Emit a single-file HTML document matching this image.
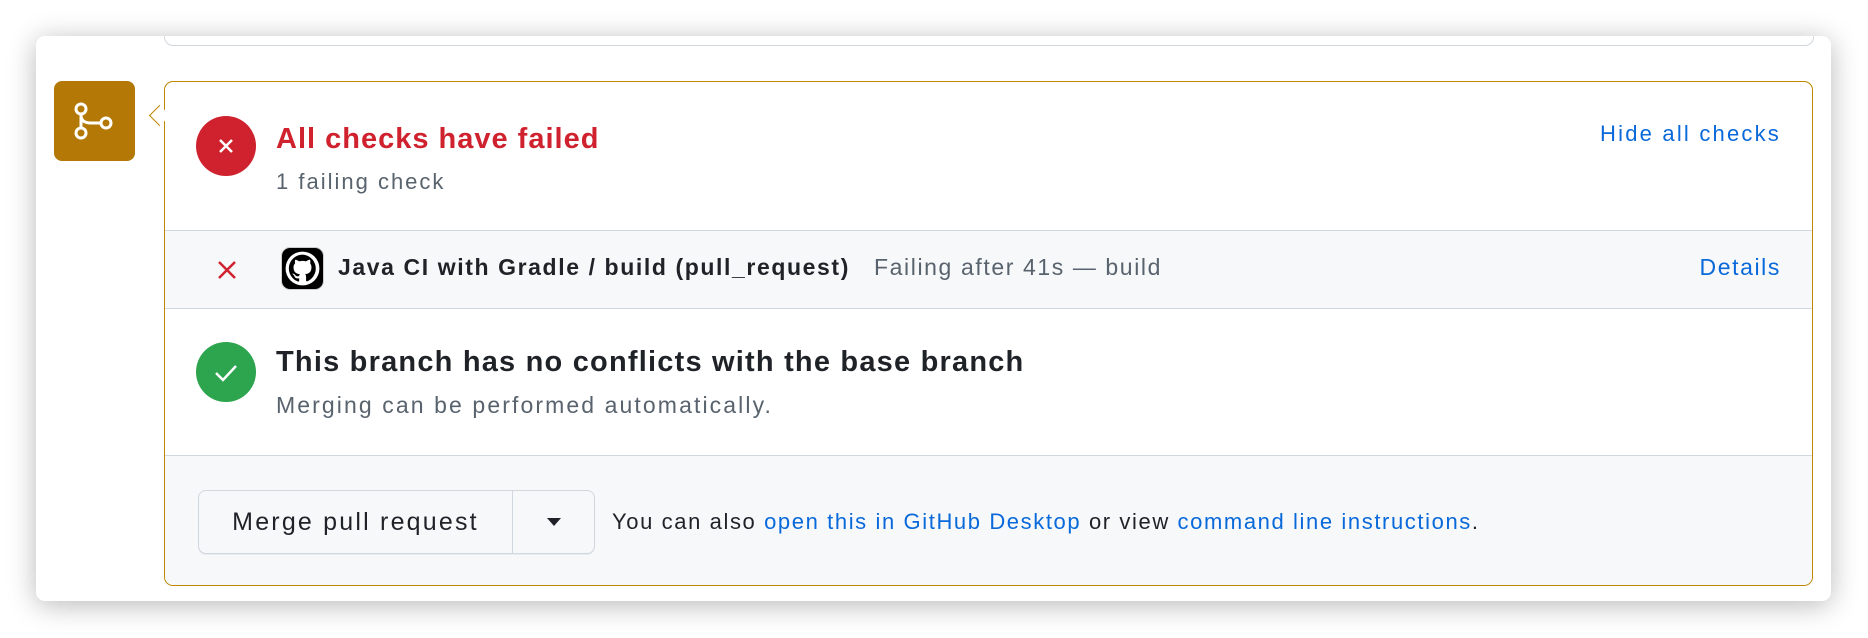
<!DOCTYPE html>
<html><head><style>
body{margin:0;width:1868px;height:638px;background:#fff;font-family:"Liberation Sans",sans-serif;position:relative;overflow:hidden}
.card{position:absolute;left:36px;top:36px;width:1795px;height:565px;background:#fff;border-radius:9px;box-shadow:0 4px 28px rgba(0,0,0,.28)}
.topbox{position:absolute;left:164px;top:36px;width:1648px;height:9px;border:1.5px solid #d0d7de;border-top:none;border-radius:0 0 9px 9px}
.ico{position:absolute;left:54px;top:81px;width:81px;height:80px;background:#b37806;border-radius:8px}
.box{position:absolute;left:164px;top:81px;width:1647px;height:503px;border:1.5px solid #bf8700;border-radius:9px;overflow:hidden;background:#fff}
.arrow{position:absolute;left:152px;top:108px;width:14px;height:14px;background:#fff;border-left:1.5px solid #bf8700;border-bottom:1.5px solid #bf8700;transform:rotate(45deg);z-index:2}
.abs{position:absolute;white-space:nowrap}
.circ{position:absolute;width:60px;height:60px;border-radius:50%}
.row{position:absolute;left:0;width:100%;background:#f6f8fa}
a{color:#0969da;text-decoration:none}
</style></head><body>
<div class="card"></div>
<div class="topbox"></div>
<div class="ico"><svg width="81" height="80" viewBox="0 0 81 80"><g fill="none" stroke="#fff" stroke-width="3"><circle cx="27" cy="28" r="5"/><circle cx="27" cy="52" r="5"/><circle cx="52" cy="42" r="5"/><path d="M27 33v14M27 34c0 6 4 8 10 8h10"/></g></svg></div>
<div class="box">
  <div class="circ" style="left:31px;top:34px;background:#cf222e"><svg width="60" height="60"><path d="M24 24l12 12M36 24l-12 12" stroke="#fff" stroke-width="2.5"/></svg></div>
  <div class="abs" style="left:111px;top:41px;font-size:29px;letter-spacing:1px;font-weight:bold;color:#cf222e">All checks have failed</div>
  <div class="abs" style="left:111px;top:87px;font-size:22px;letter-spacing:2px;color:#59636e">1 failing check</div>
  <div class="abs" style="right:31px;top:39px;font-size:22px;letter-spacing:2.2px"><a>Hide all checks</a></div>
  <div class="row" style="top:148px;height:77px;border-top:1.5px solid #d0d7de;border-bottom:1.5px solid #d0d7de">
    <svg class="abs" style="left:51px;top:28px" width="22" height="22"><path d="M3 3l16 16M19 3L3 19" stroke="#cf222e" stroke-width="2.5"/></svg>
    <div class="abs" style="left:116px;top:16px;width:43px;height:43px;background:#000;border-radius:9px;border:1px solid #ccc;box-sizing:border-box">
      <svg width="41" height="41" viewBox="0 0 16 16"><circle cx="8" cy="8" r="6.6" fill="#fff"/><path fill="#000" d="M8 2.6a5.4 5.4 0 0 0-1.7 10.5c.3 0 .4-.1.4-.3v-1c-1.5.3-1.8-.7-1.8-.7-.3-.6-.6-.8-.6-.8-.5-.3 0-.3 0-.3.5 0 .8.5.8.5.5.8 1.3.6 1.6.4 0-.3.2-.6.3-.7-1.2-.1-2.500-.6-2.5-2.7 0-.6.2-1.1.6-1.5 0-.1-.2-.7.1-1.4 0 0 .4-.1 1.5.6a5 5 0 0 1 2.7 0c1-.7 1.5-.6 1.5-.6.3.7.1 1.3.1 1.4.3.4.5.9.5 1.5 0 2.1-1.3 2.6-2.5 2.7.2.2.4.5.4 1v1.5c0 .2.1.3.4.3A5.4 5.4 0 0 0 8 2.6z"/></svg>
    </div>
    <div class="abs" style="left:173px;top:23px;font-size:23px;letter-spacing:1.6px;font-weight:bold;color:#1f2328">Java CI with Gradle / build (pull_request)</div>
    <div class="abs" style="left:709px;top:23px;font-size:23px;letter-spacing:1.6px;color:#59636e">Failing after 41s — build</div>
    <div class="abs" style="right:31px;top:23px;font-size:23px;letter-spacing:1.6px"><a>Details</a></div>
  </div>
  <div class="circ" style="left:31px;top:260px;background:#2da44e"><svg width="60" height="60"><path d="M20 31l7 7 13-14" fill="none" stroke="#fff" stroke-width="2.5"/></svg></div>
  <div class="abs" style="left:111px;top:264px;font-size:29px;letter-spacing:1.2px;font-weight:bold;color:#1f2328">This branch has no conflicts with the base branch</div>
  <div class="abs" style="left:111px;top:310px;font-size:23px;letter-spacing:2.1px;color:#59636e">Merging can be performed automatically.</div>
  <div class="row" style="top:373px;height:140px;border-top:1.5px solid #d0d7de">
    <div class="abs" style="left:33px;top:34px;width:395px;height:62px;border:1.5px solid #d0d7de;border-radius:8px;background:#f6f8fa;box-shadow:0 1px 0 rgba(31,35,40,.06)">
      <div class="abs" style="left:0;top:0;width:313px;height:62px;border-right:1.5px solid #d0d7de;line-height:62px;text-align:center;font-size:25px;letter-spacing:2.2px;color:#1f2328">Merge pull request</div>
      <svg class="abs" style="left:347px;top:25px" width="16" height="12"><path d="M1 2h14L8 10z" fill="#1f2328"/></svg>
    </div>
    <div class="abs" style="left:447px;top:53px;font-size:22px;letter-spacing:1.6px;color:#1f2328">You can also <a>open this in GitHub Desktop</a> or view <a>command line instructions</a>.</div>
  </div>
</div>
<div class="arrow"></div>
</body></html>
